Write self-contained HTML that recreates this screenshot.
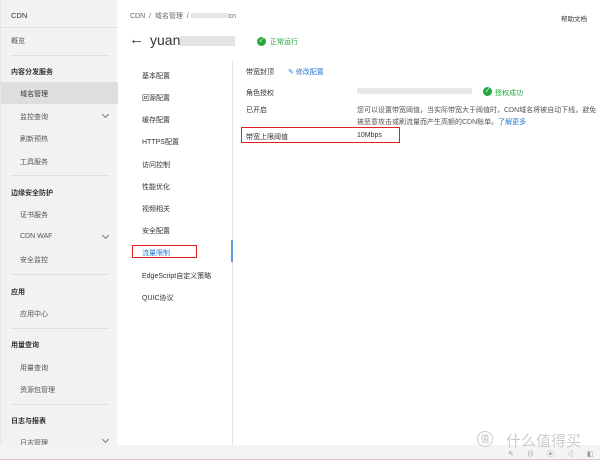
<!DOCTYPE html><html><head><meta charset="utf-8"><style>
*{margin:0;padding:0;box-sizing:border-box}
body{width:600px;height:460px;overflow:hidden;background:#fff;font-family:"Liberation Sans","Noto Sans CJK SC",sans-serif;font-size:7px;color:#333;position:relative}
.abs{position:absolute;white-space:nowrap}
#side{position:absolute;left:0;top:0;width:117px;height:445px;background:#f2f2f2;border-left:1px solid #e6e6e6}
.hr{position:absolute;left:10px;width:98px;height:1px;background:#e0e0e0}
.chev{position:absolute;left:102px;width:5px;height:5px;border-right:1px solid #777;border-bottom:1px solid #777;transform:rotate(45deg)}
</style></head><body>
<div class="abs" style="left:0;top:0;width:30px;height:2px;background:#f56a00"></div>
<div id="side">
<div class="abs" style="left:10px;top:11px;font-size:7.5px;color:#333">CDN</div>
<div style="position:absolute;left:0;top:27px;width:117px;height:1px;background:#e4e4e4"></div>
<div class="abs" style="left:10px;top:36px;color:#555">概览</div>
<div class="hr" style="top:55px"></div>
<div class="abs" style="left:10px;top:67px;font-weight:bold">内容分发服务</div>
<div style="position:absolute;left:0;top:82px;width:117px;height:22px;background:#dedede"></div>
<div class="abs" style="left:19px;top:89px;color:#333">域名管理</div>
<div class="abs" style="left:19px;top:112px;color:#555">监控查询</div><div class="chev" style="top:112px"></div>
<div class="abs" style="left:19px;top:134px;color:#555">刷新预热</div>
<div class="abs" style="left:19px;top:157px;color:#555">工具服务</div>
<div class="hr" style="top:175px"></div>
<div class="abs" style="left:10px;top:188px;font-weight:bold">边缘安全防护</div>
<div class="abs" style="left:19px;top:210px;color:#555">证书服务</div>
<div class="abs" style="left:19px;top:233px;color:#555">CDN WAF</div><div class="chev" style="top:233px"></div>
<div class="abs" style="left:19px;top:255px;color:#555">安全监控</div>
<div class="hr" style="top:274px"></div>
<div class="abs" style="left:10px;top:287px;font-weight:bold">应用</div>
<div class="abs" style="left:19px;top:309px;color:#555">应用中心</div>
<div class="hr" style="top:328px"></div>
<div class="abs" style="left:10px;top:340px;font-weight:bold">用量查询</div>
<div class="abs" style="left:19px;top:363px;color:#555">用量查询</div>
<div class="abs" style="left:19px;top:385px;color:#555">资源包管理</div>
<div class="hr" style="top:404px"></div>
<div class="abs" style="left:10px;top:416px;font-weight:bold">日志与报表</div>
<div class="abs" style="left:19px;top:438px;color:#555">日志管理</div><div class="chev" style="top:437px"></div>
</div>
<div class="abs" style="left:130px;top:11px;color:#666">CDN &nbsp;/ &nbsp;域名管理 &nbsp;/ <span style="display:inline-block;width:38px;height:5px;background:#e6e6e6"></span>cn</div>
<div class="abs" style="left:561px;top:13px;color:#333;font-size:6.5px">帮助文档</div>
<div class="abs" style="left:129px;top:31px;font-size:15px;color:#333">←</div>
<div class="abs" style="left:150px;top:32px;font-size:14px;color:#333">yuan<span style="display:inline-block;width:55px;height:10px;background:#e4e4e4;vertical-align:middle"></span></div>
<div class="abs" style="left:257px;top:37px;width:9px;height:9px;border-radius:50%;background:#25a73f;color:#fff;font-size:6px;text-align:center;line-height:9px">✓</div>
<div class="abs" style="left:270px;top:37px;color:#25a73f">正常运行</div>
<div class="abs" style="left:142px;top:71px">基本配置</div>
<div class="abs" style="left:142px;top:93px">回源配置</div>
<div class="abs" style="left:142px;top:115px">缓存配置</div>
<div class="abs" style="left:142px;top:137px">HTTPS配置</div>
<div class="abs" style="left:142px;top:160px">访问控制</div>
<div class="abs" style="left:142px;top:182px">性能优化</div>
<div class="abs" style="left:142px;top:204px">视频相关</div>
<div class="abs" style="left:142px;top:226px">安全配置</div>
<div class="abs" style="left:132px;top:245px;width:65px;height:13px;border:1.5px solid #e02020"></div>
<div class="abs" style="left:142px;top:248px;color:#2a7ad6">流量限制</div>
<div class="abs" style="left:142px;top:271px">EdgeScript自定义策略</div>
<div class="abs" style="left:142px;top:293px">QUIC协议</div>
<div class="abs" style="left:232px;top:60px;width:1px;height:385px;background:#e6e6e6"></div>
<div class="abs" style="left:231px;top:240px;width:2px;height:22px;background:#5a9be0"></div>
<div class="abs" style="left:246px;top:67px">带宽封顶</div>
<div class="abs" style="left:288px;top:67px;color:#2a7ad6">✎ 修改配置</div>
<div class="abs" style="left:246px;top:88px">角色授权</div>
<div class="abs" style="left:357px;top:88px;width:115px;height:6px;background:#e8e8e8"></div>
<div class="abs" style="left:483px;top:87px;width:9px;height:9px;border-radius:50%;background:#25a73f;color:#fff;font-size:6px;text-align:center;line-height:9px">✓</div>
<div class="abs" style="left:495px;top:88px;color:#25a73f">授权成功</div>
<div class="abs" style="left:246px;top:105px">已开启</div>
<div class="abs" style="left:357px;top:105px;color:#555;line-height:12px">您可以设置带宽阈值，当实际带宽大于阈值时，CDN域名将被自动下线，避免<br>被恶意攻击或刷流量而产生高额的CDN账单。<span style="color:#2a7ad6">了解更多</span></div>
<div class="abs" style="left:241px;top:127px;width:159px;height:16px;border:1.5px solid #e02020"></div>
<div class="abs" style="left:246px;top:132px">带宽上限阈值</div>
<div class="abs" style="left:357px;top:132px">10Mbps</div>
<div class="abs" style="left:0;top:445px;width:600px;height:15px;background:#f4f4f4;border-bottom:1px solid #e0c8c0"></div>
<div class="abs" style="left:477px;top:431px;width:16px;height:16px;border-radius:50%;border:1px solid #ccc;color:#bbb;font-size:9px;text-align:center;line-height:14px">值</div>
<div class="abs" style="left:506px;top:430px;font-size:15px;color:#ccc">什么值得买</div>
<div class="abs" style="left:508px;top:449px;font-size:7px;color:#999;letter-spacing:13px">✎⊖▣◁◧</div>
</body></html>
